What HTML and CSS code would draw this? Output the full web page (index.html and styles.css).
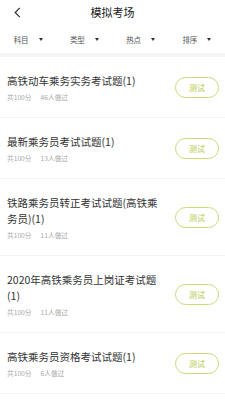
FILE: index.html
```html
<!DOCTYPE html>
<html lang="zh-CN">
<head>
<meta charset="utf-8">
<title>模拟考场</title>
<link rel="stylesheet" href="styles.css">
</head>
<body>
<div class="page">
  <header class="nav">
    <span class="back">
      <svg width="7" height="11" viewBox="0 0 7 11"><path d="M5.8 0.8 L1.2 5.5 L5.8 10.2" fill="none" stroke="#333" stroke-width="1.2"/></svg>
    </span>
    <h1 class="nav-title">模拟考场</h1>
  </header>
  <div class="filters">
    <div class="filter"><span>科目</span><i class="tri"></i></div>
    <div class="filter"><span>类型</span><i class="tri"></i></div>
    <div class="filter"><span>热点</span><i class="tri"></i></div>
    <div class="filter"><span>排序</span><i class="tri"></i></div>
  </div>
  <div class="gap"></div>
  <ul class="list">
    <li class="item">
      <div class="info">
        <div class="title">高铁动车乘务实务考试题(1)</div>
        <div class="meta"><span>共100分</span><span>46人做过</span></div>
      </div>
      <button class="btn">测试</button>
    </li>
    <li class="item">
      <div class="info">
        <div class="title">最新乘务员考试试题(1)</div>
        <div class="meta"><span>共100分</span><span>13人做过</span></div>
      </div>
      <button class="btn">测试</button>
    </li>
    <li class="item">
      <div class="info">
        <div class="title">铁路乘务员转正考试试题(高铁乘务员)(1)</div>
        <div class="meta"><span>共100分</span><span>11人做过</span></div>
      </div>
      <button class="btn">测试</button>
    </li>
    <li class="item">
      <div class="info">
        <div class="title">2020年高铁乘务员上岗证考试题(1)</div>
        <div class="meta"><span>共100分</span><span>11人做过</span></div>
      </div>
      <button class="btn">测试</button>
    </li>
    <li class="item">
      <div class="info">
        <div class="title">高铁乘务员资格考试试题(1)</div>
        <div class="meta"><span>共100分</span><span>6人做过</span></div>
      </div>
      <button class="btn">测试</button>
    </li>
  </ul>
</div>
</body>
</html>
```
FILE: styles.css
```css
* { box-sizing: border-box; }
html, body {
  margin: 0;
  padding: 0;
  background: #fff;
}
body {
  font-family: "Noto Sans CJK SC", "Noto Sans", sans-serif;
  color: #333;
  width: 225px;
  overflow: hidden;
}
.page { width: 225px; }
.nav {
  height: 25px;
  display: flex;
  align-items: center;
  justify-content: center;
  position: relative;
}
.back {
  position: absolute;
  left: 14px;
  top: 7px;
  display: flex;
}
.nav-title {
  margin: 0;
  font-size: 11px;
  font-weight: 400;
  color: #222;
  line-height: 25px;
}
.filters {
  height: 28px;
  display: flex;
}
.filter {
  flex: 1;
  display: flex;
  align-items: center;
  justify-content: center;
  gap: 10px;
  font-size: 7.5px;
  color: #555;
}
.tri {
  width: 0;
  height: 0;
  border-left: 2.5px solid transparent;
  border-right: 2.5px solid transparent;
  border-top: 3px solid #333;
}
.gap {
  height: 4px;
  background: #f5f5f5;
}
.list {
  list-style: none;
  margin: 0;
  padding: 0;
}
.item {
  display: flex;
  align-items: center;
  gap: 8px;
  padding: 16px 6px 15px 7px;
  border-bottom: 1px solid #f4f4f4;
}
.info {
  flex: 1;
  min-width: 0;
}
.title {
  font-size: 10.5px;
  line-height: 16px;
  color: #333;
}
.meta {
  margin-top: 3px;
  font-size: 6.7px;
  line-height: 10px;
  color: #aaa;
  display: flex;
  gap: 9px;
}
.btn {
  flex: none;
  width: 44px;
  height: 21px;
  border: 1px solid #cbdb76;
  border-radius: 11px;
  background: #fff;
  color: #b6c84a;
  font-family: inherit;
  font-size: 8px;
  padding: 0;
  line-height: 19px;
}
```
